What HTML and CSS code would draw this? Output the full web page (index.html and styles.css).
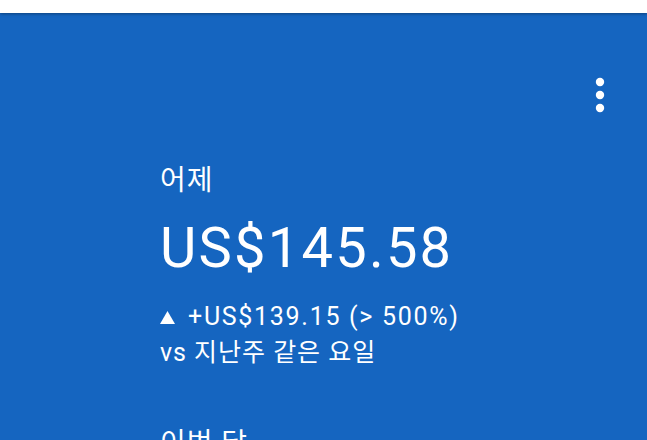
FILE: index.html
```html
<!DOCTYPE html>
<html lang="ko">
<head>
    <meta charset="UTF-8">
    <meta name="viewport" content="width=device-width, initial-scale=1.0">
    <title>수익</title>
    <link rel="stylesheet" href="styles.css">
</head>
<body>

    <div class="top-bar"></div>

    <div class="card">
        <div class="card-header">
            <button class="menu-button" aria-label="더보기">
                <svg width="10" height="36" viewBox="0 0 10 36">
                    <circle cx="5" cy="5" r="4.2" fill="#fff"/>
                    <circle cx="5" cy="18" r="4.2" fill="#fff"/>
                    <circle cx="5" cy="31" r="4.2" fill="#fff"/>
                </svg>
            </button>
        </div>

        <div class="stat">
            <div class="stat-label">어제</div>
            <div class="stat-value">US$145.58</div>
            <div class="stat-change">
                <svg class="arrow" width="15" height="13" viewBox="0 0 15 13">
                    <path d="M7.5 0 L15 13 L0 13 Z" fill="#fff"/>
                </svg>
                <span>+US$139.15 (&gt; 500%)</span>
            </div>
            <div class="stat-compare">vs 지난주 같은 요일</div>
        </div>

        <div class="stat">
            <div class="stat-label">이번 달</div>
        </div>
    </div>

</body>
</html>
```

FILE: styles.css
```css
:root {
    --bg-color: #ffffff;
    --card-bg: #1565c0;
    --text-color: #ffffff;
}

body {
    font-family: Roboto, "Noto Sans CJK KR", sans-serif;
    background-color: var(--bg-color);
    color: var(--text-color);
    letter-spacing: 0.06em;
    margin: 0;
    overflow: hidden;
}

.top-bar {
    height: 13px;
    background: var(--bg-color);
    box-shadow: 0 1px 3px rgba(0, 0, 0, 0.35);
    position: relative;
    z-index: 1;
}

.card {
    background: var(--card-bg);
    padding: 0 0 40px 160px;
    height: 500px;
}

.card-header {
    display: flex;
    justify-content: flex-end;
    padding: 64px 42px 0 0;
}

.menu-button {
    background: none;
    border: none;
    padding: 0;
    cursor: pointer;
    display: flex;
}

.stat {
    margin-top: 50px;
}

.stat-label {
    font-size: 28px;
    line-height: 36px;
}

.stat-value {
    font-size: 56px;
    line-height: 64px;
    letter-spacing: 0.04em;
    margin-top: 17px;
}

.stat-change {
    display: flex;
    align-items: baseline;
    gap: 13px;
    font-size: 25px;
    line-height: 36px;
    letter-spacing: 0.068em;
    margin-top: 19px;
}

.stat-compare {
    font-size: 25px;
    line-height: 36px;
}

.arrow {
    align-self: center;
}

.stat + .stat {
    margin-top: 55px;
}
```
